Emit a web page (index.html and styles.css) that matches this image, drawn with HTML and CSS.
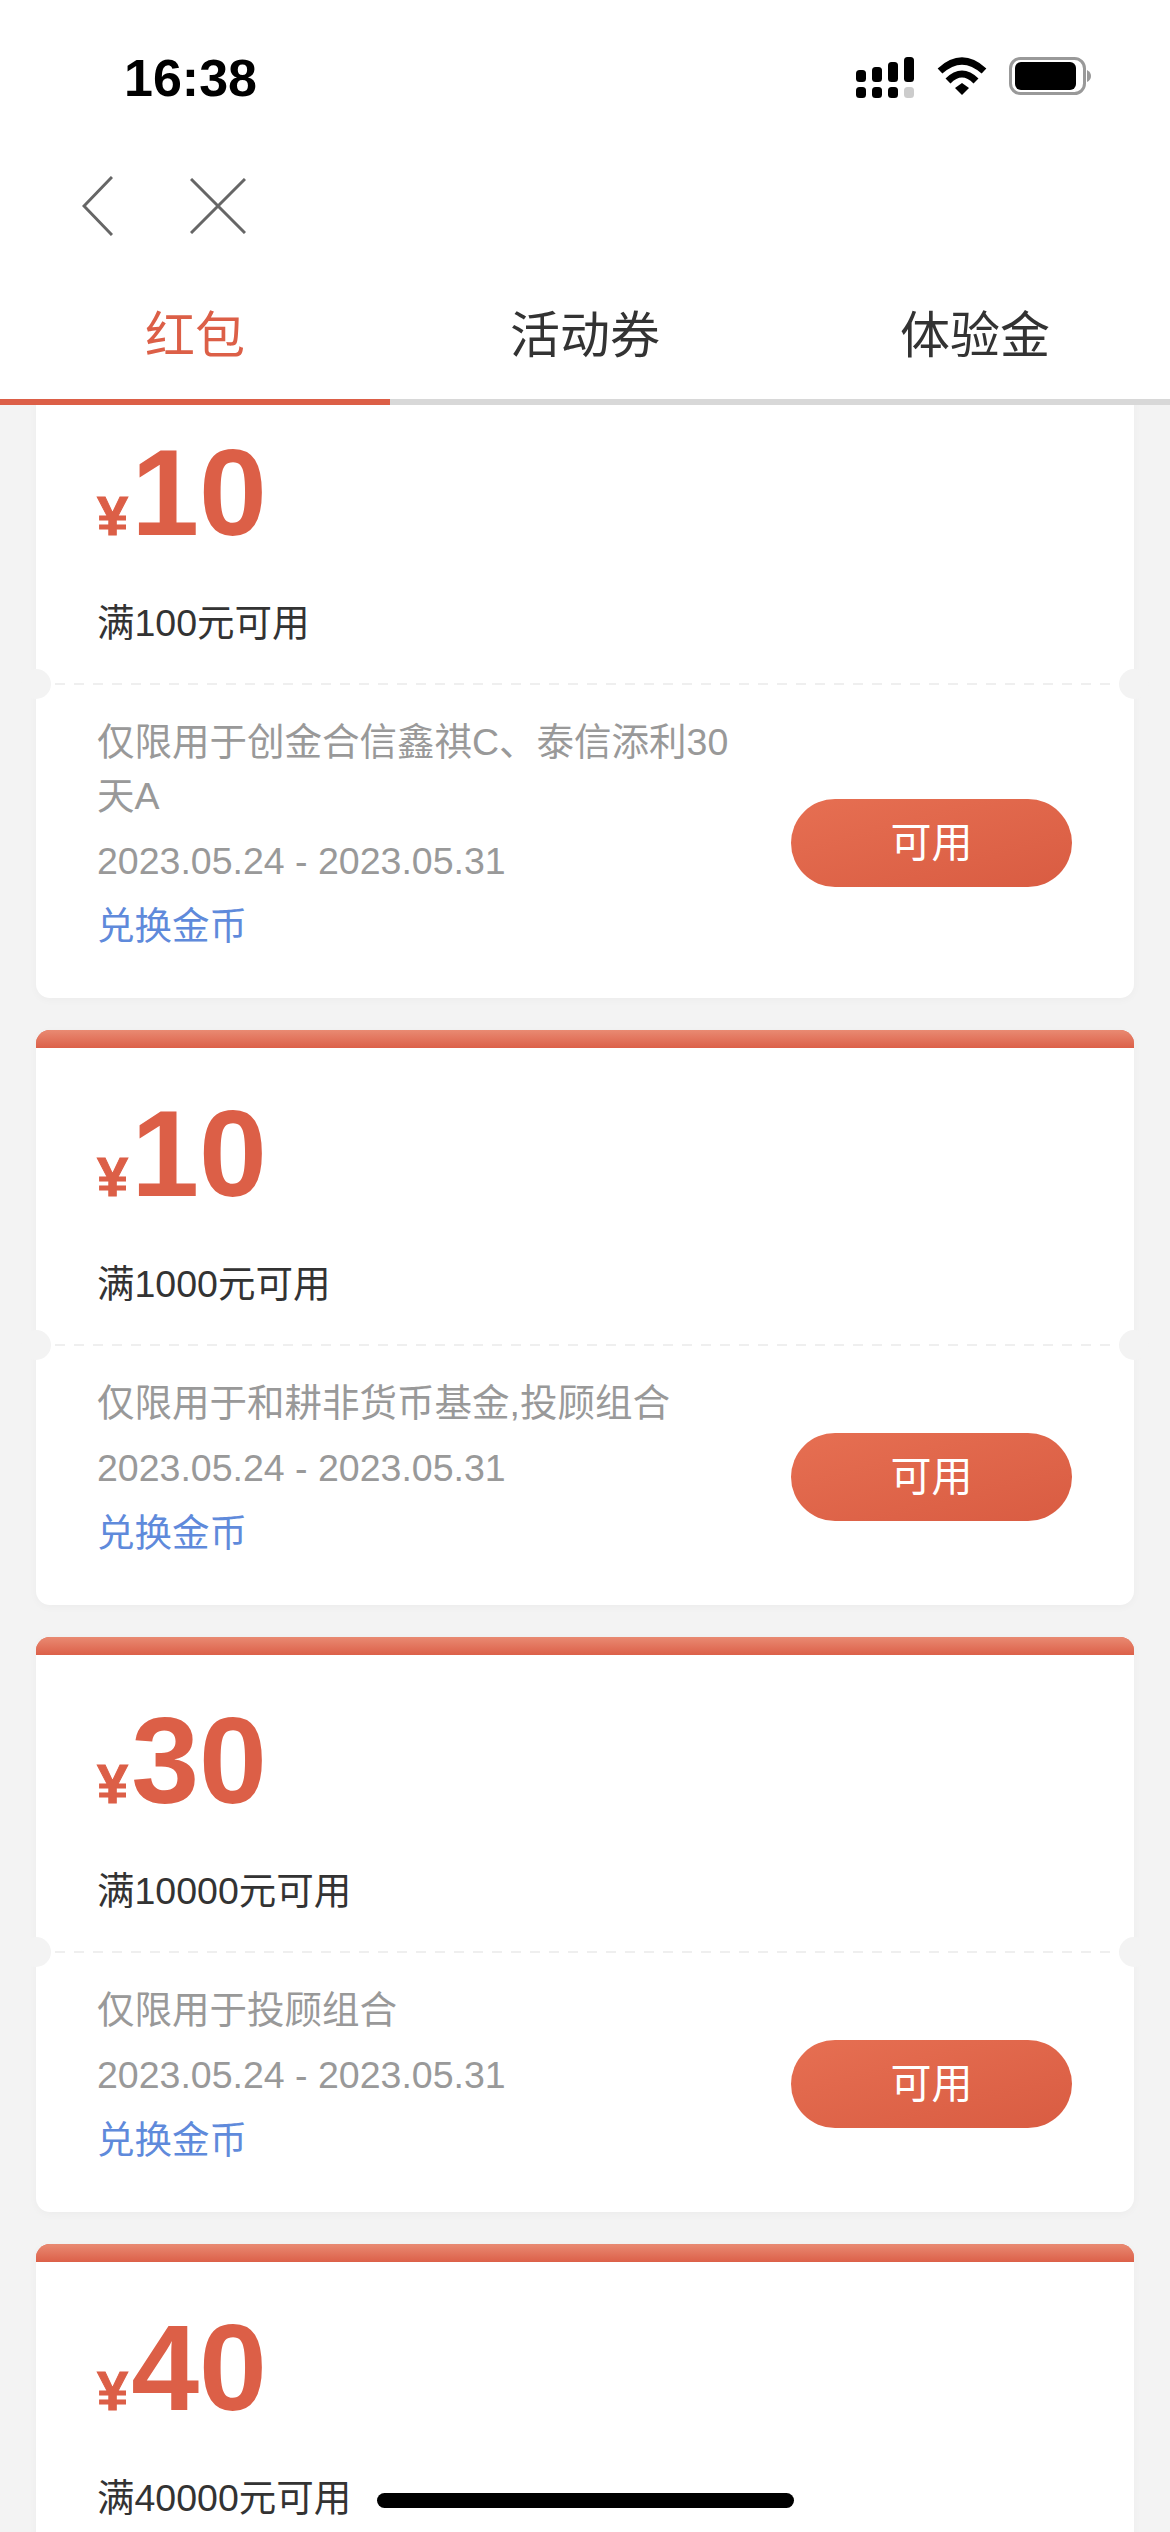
FILE: index.html
```html
<!DOCTYPE html>
<html lang="zh-CN">

<head>
    <meta charset="UTF-8">
    <meta name="viewport" content="width=device-width, initial-scale=1.0">
    <title>红包</title>
    <link rel="stylesheet" href="styles.css">
</head>

<body>
    <div class="page">
        <div class="head">
            <div class="status">
                <span class="time">16:38</span>
                <div class="status-icons">
                    <svg class="signal" width="58" height="41" viewBox="0 0 58 41">
                        <rect x="0" y="13" width="10" height="12" rx="3.5"/>
                        <rect x="16" y="10" width="10" height="15" rx="3.5"/>
                        <rect x="32" y="5" width="10" height="20" rx="3.5"/>
                        <rect x="48" y="0" width="10" height="25" rx="3.5"/>
                        <rect x="0" y="30" width="10" height="11" rx="3.5"/>
                        <rect x="16" y="30" width="10" height="11" rx="3.5"/>
                        <rect x="32" y="30" width="10" height="11" rx="3.5"/>
                        <rect x="48" y="30" width="10" height="11" rx="3.5" fill="#ccc"/>
                    </svg>
                    <svg class="wifi" width="50" height="38" viewBox="0 0 50 38">
                        <path d="M3 14Q25 -6 47 14" fill="none" stroke="#000" stroke-width="7"/>
                        <path d="M11 24Q25 10 39 24" fill="none" stroke="#000" stroke-width="7"/>
                        <path d="M18 31L25 26L32 31L25 38Z"/>
                    </svg>
                    <svg class="battery" width="82" height="38" viewBox="0 0 82 38">
                        <rect x="1.5" y="1.5" width="74" height="35" rx="10" fill="none" stroke="#999" stroke-width="3"/>
                        <rect x="6" y="5" width="61" height="28" rx="6"/>
                        <path d="M78 13Q82 15 82 19Q82 23 78 25Z" fill="#999"/>
                    </svg>
                </div>
            </div>
            <div class="nav">
                <svg width="31" height="60" viewBox="0 0 31 60">
                    <path d="M30 1L2 30L30 59" fill="none" stroke="#666" stroke-width="3"/>
                </svg>
                <svg width="56" height="56" viewBox="0 0 56 56">
                    <path d="M1 1L55 55M55 1L1 55" fill="none" stroke="#666" stroke-width="3"/>
                </svg>
            </div>
            <div class="tabs">
                <div class="tab active">红包</div>
                <div class="tab">活动券</div>
                <div class="tab">体验金</div>
            </div>
        </div>

        <div class="list">
            <div class="card">
                <div class="card-top">
                    <div class="amount"><span class="yen">¥</span><span class="num">10</span></div>
                    <div class="rule">满100元可用</div>
                </div>
                <div class="cut"></div>
                <div class="card-bottom">
                    <div class="info">
                        <div class="desc">仅限用于创金合信鑫祺C、泰信添利30天A</div>
                        <div class="date">2023.05.24 - 2023.05.31</div>
                        <div class="link">兑换金币</div>
                    </div>
                    <div class="btn">可用</div>
                </div>
            </div>

            <div class="card">
                <div class="card-top">
                    <div class="amount"><span class="yen">¥</span><span class="num">10</span></div>
                    <div class="rule">满1000元可用</div>
                </div>
                <div class="cut"></div>
                <div class="card-bottom">
                    <div class="info">
                        <div class="desc">仅限用于和耕非货币基金,投顾组合</div>
                        <div class="date">2023.05.24 - 2023.05.31</div>
                        <div class="link">兑换金币</div>
                    </div>
                    <div class="btn">可用</div>
                </div>
            </div>

            <div class="card">
                <div class="card-top">
                    <div class="amount"><span class="yen">¥</span><span class="num">30</span></div>
                    <div class="rule">满10000元可用</div>
                </div>
                <div class="cut"></div>
                <div class="card-bottom">
                    <div class="info">
                        <div class="desc">仅限用于投顾组合</div>
                        <div class="date">2023.05.24 - 2023.05.31</div>
                        <div class="link">兑换金币</div>
                    </div>
                    <div class="btn">可用</div>
                </div>
            </div>

            <div class="card">
                <div class="card-top">
                    <div class="amount"><span class="yen">¥</span><span class="num">40</span></div>
                    <div class="rule">满40000元可用</div>
                </div>
            </div>
        </div>

        <div class="home-bar"></div>
    </div>
</body>

</html>
```

FILE: styles.css
```css
* {
    margin: 0;
    padding: 0;
    box-sizing: border-box;
}

body {
    font-family: "Liberation Sans", "Noto Sans CJK SC", sans-serif;
    background: #f3f3f3;
}

.page {
    position: relative;
    width: 1170px;
    height: 2532px;
    display: flex;
    flex-direction: column;
    overflow: hidden;
}

.head {
    background: #fff;
}

.status {
    height: 145px;
    padding: 52px 79px 0 124px;
    display: flex;
    justify-content: space-between;
    align-items: flex-start;
}

.time {
    font-size: 52px;
    line-height: 52px;
    font-weight: 700;
    color: #000;
}

.status-icons {
    display: flex;
    gap: 22px;
    margin-top: 5px;
}

.signal {
    margin-right: 1px;
}

.nav {
    height: 121px;
    padding-left: 82px;
    display: flex;
    align-items: center;
    gap: 77px;
}

.tabs {
    display: flex;
    border-bottom: 6px solid #d8d8d8;
}

.tab {
    flex: 1;
    height: 133px;
    margin-bottom: -6px;
    padding-top: 5px;
    text-align: center;
    font-size: 50px;
    line-height: 130px;
    color: #333;
}

.tab.active {
    height: 139px;
    color: #dc5f47;
    border-bottom: 6px solid #dc5f47;
}

.list {
    flex: 1;
    padding: 0 36px;
    overflow: hidden;
}

.card {
    background: #fff;
    border-radius: 14px;
    margin-bottom: 32px;
    box-shadow: 0 2px 8px rgba(0, 0, 0, 0.03);
}

.card:first-child {
    margin-top: -36px;
}

.card-top {
    height: 315px;
    padding: 45px 61px 0;
    border-top: 18px solid #dc5f47;
    border-radius: 14px 14px 0 0;
    position: relative;
}

.card-top::before {
    content: "";
    position: absolute;
    left: 0;
    right: 0;
    top: -18px;
    height: 18px;
    border-radius: 14px 14px 0 0;
    background: linear-gradient(180deg, #e98a72, #dc6049);
}

.amount {
    display: flex;
    align-items: baseline;
    height: 122px;
    color: #dc5f47;
    font-weight: 700;
}

.yen {
    margin-right: 3px;
    font-size: 56px;
    -webkit-text-stroke: 1px #dc5f47;
}

.num {
    font-size: 122px;
    line-height: 122px;
}

.rule {
    margin-top: 42px;
    font-size: 37.5px;
    line-height: 54px;
    color: #333;
}

.cut {
    position: relative;
    height: 2px;
    margin-top: -1px;
    margin-bottom: -1px;
    background: repeating-linear-gradient(90deg, #efefef 0, #efefef 10px, transparent 10px, transparent 19px);
}

.cut::before,
.cut::after {
    content: "";
    position: absolute;
    top: -14px;
    width: 30px;
    height: 30px;
    border-radius: 50%;
    background: #f3f3f3;
}

.cut::before {
    left: -15px;
}

.cut::after {
    right: -15px;
}

.card-bottom {
    padding: 31px 62px 45px 61px;
    display: flex;
    justify-content: space-between;
    align-items: center;
}

.info {
    width: 650px;
    font-size: 37.5px;
    line-height: 54px;
    color: #999;
}

.date {
    margin-top: 11px;
}

.link {
    margin-top: 11px;
    color: #5f8adb;
}

.btn {
    width: 281px;
    height: 88px;
    margin-top: 18px;
    border-radius: 44px;
    background: linear-gradient(165deg, #e66f52, #d95c42);
    color: #fff;
    font-size: 41px;
    line-height: 88px;
    text-align: center;
}

.home-bar {
    position: absolute;
    left: 377px;
    top: 2493px;
    width: 417px;
    height: 15px;
    border-radius: 8px;
    background: #000;
}
```
